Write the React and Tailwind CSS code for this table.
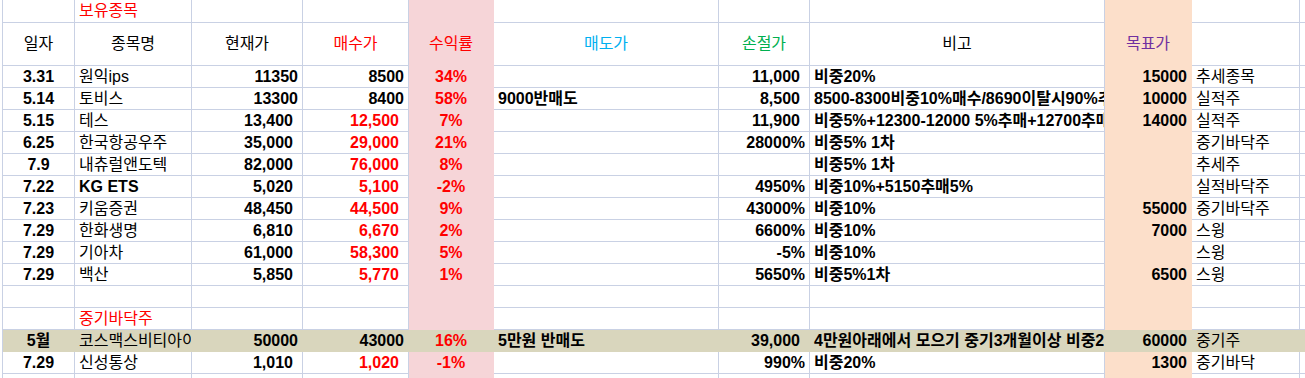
const W = [
  "w-[72px]",
  "w-[117px]",
  "w-[111px]",
  "w-[106px]",
  "w-[85px]",
  "w-[225px]",
  "w-[91px]",
  "w-[295px]",
  "w-[87px]",
  "w-[108px]",
];

const PINK = "bg-[#f6d5d8]";
const PEACH = "bg-[#fcdfca]";
const BEIGE = "bg-[#d9d6bd]";

// align: c = center, l = left, r = plain number, rc = comma number (extra pad)
const AL = {
  c: "justify-center",
  l: "justify-start pl-1",
  r: "justify-end pr-[4px]",
  rc: "justify-end pr-[9px]",
};

// [text, align, className]
const rows = [
  [["3.31", "c", "font-bold"], ["원익ips", "l"], ["11350", "r", "font-bold"], ["8500", "r", "font-bold"], ["34%", "c", "font-bold text-[#ff0000]"], ["", "l"], ["11,000", "rc", "font-bold"], ["비중20%", "l", "font-bold"], ["15000", "r", "font-bold"], ["추세종목", "l"]],
  [["5.14", "c", "font-bold"], ["토비스", "l"], ["13300", "r", "font-bold"], ["8400", "r", "font-bold"], ["58%", "c", "font-bold text-[#ff0000]"], ["9000반매도", "l", "font-bold"], ["8,500", "rc", "font-bold"], ["8500-8300비중10%매수/8690이탈시90%추매", "l", "font-bold"], ["10000", "r", "font-bold"], ["실적주", "l"]],
  [["5.15", "c", "font-bold"], ["테스", "l"], ["13,400", "rc", "font-bold"], ["12,500", "rc", "font-bold text-[#ff0000]"], ["7%", "c", "font-bold text-[#ff0000]"], ["", "l"], ["11,900", "rc", "font-bold"], ["비중5%+12300-12000 5%추매+12700추매", "l", "font-bold"], ["14000", "r", "font-bold"], ["실적주", "l"]],
  [["6.25", "c", "font-bold"], ["한국항공우주", "l"], ["35,000", "rc", "font-bold"], ["29,000", "rc", "font-bold text-[#ff0000]"], ["21%", "c", "font-bold text-[#ff0000]"], ["", "l"], ["28000%", "r", "font-bold"], ["비중5% 1차", "l", "font-bold"], ["", "r"], ["중기바닥주", "l"]],
  [["7.9", "c", "font-bold"], ["내츄럴앤도텍", "l"], ["82,000", "rc", "font-bold"], ["76,000", "rc", "font-bold text-[#ff0000]"], ["8%", "c", "font-bold text-[#ff0000]"], ["", "l"], ["", "r"], ["비중5% 1차", "l", "font-bold"], ["", "r"], ["추세주", "l"]],
  [["7.22", "c", "font-bold"], ["KG ETS", "l", "font-bold"], ["5,020", "rc", "font-bold"], ["5,100", "rc", "font-bold text-[#ff0000]"], ["-2%", "c", "font-bold text-[#ff0000]"], ["", "l"], ["4950%", "r", "font-bold"], ["비중10%+5150추매5%", "l", "font-bold"], ["", "r"], ["실적바닥주", "l"]],
  [["7.23", "c", "font-bold"], ["키움증권", "l"], ["48,450", "rc", "font-bold"], ["44,500", "rc", "font-bold text-[#ff0000]"], ["9%", "c", "font-bold text-[#ff0000]"], ["", "l"], ["43000%", "r", "font-bold"], ["비중10%", "l", "font-bold"], ["55000", "r", "font-bold"], ["중기바닥주", "l"]],
  [["7.29", "c", "font-bold"], ["한화생명", "l"], ["6,810", "rc", "font-bold"], ["6,670", "rc", "font-bold text-[#ff0000]"], ["2%", "c", "font-bold text-[#ff0000]"], ["", "l"], ["6600%", "r", "font-bold"], ["비중10%", "l", "font-bold"], ["7000", "r", "font-bold"], ["스윙", "l"]],
  [["7.29", "c", "font-bold"], ["기아차", "l"], ["61,000", "rc", "font-bold"], ["58,300", "rc", "font-bold text-[#ff0000]"], ["5%", "c", "font-bold text-[#ff0000]"], ["", "l"], ["-5%", "r", "font-bold"], ["비중10%", "l", "font-bold"], ["", "r"], ["스윙", "l"]],
  [["7.29", "c", "font-bold"], ["백산", "l"], ["5,850", "rc", "font-bold"], ["5,770", "rc", "font-bold text-[#ff0000]"], ["1%", "c", "font-bold text-[#ff0000]"], ["", "l"], ["5650%", "r", "font-bold"], ["비중5%1차", "l", "font-bold"], ["6500", "r", "font-bold"], ["스윙", "l"]],
];

const empty = Array.from({ length: 10 }, () => ["", "l"]);

const sectionRow = (title) =>
  empty.map((c, i) => (i === 1 ? [title, "l", "text-[#ff0000]"] : c));

const header = [
  ["일자", "c"],
  ["종목명", "c"],
  ["현재가", "c"],
  ["매수가", "c", "text-[#ff0000]"],
  ["수익률", "c", "text-[#ff0000]"],
  ["매도가", "c", "text-[#00b0f0]"],
  ["손절가", "c", "text-[#00b050]"],
  ["비고", "c"],
  ["목표가", "c", "text-[#7030a0]"],
  ["", "l"],
];

const kosmax = [["5월", "c", "font-bold"], ["코스맥스비티아이", "l"], ["50000", "r", "font-bold"], ["43000", "r", "font-bold"], ["16%", "c", "font-bold text-[#ff0000]"], ["5만원 반매도", "l", "font-bold"], ["39,000", "rc", "font-bold"], ["4만원아래에서 모으기 중기3개월이상 비중20%", "l", "font-bold"], ["60000", "r", "font-bold"], ["중기주", "l"]];

const sinsung = [["7.29", "c", "font-bold"], ["신성통상", "l"], ["1,010", "rc", "font-bold"], ["1,020", "rc", "font-bold text-[#ff0000]"], ["-1%", "c", "font-bold text-[#ff0000]"], ["", "l"], ["990%", "r", "font-bold"], ["비중20%", "l", "font-bold"], ["1300", "r", "font-bold"], ["중기바닥", "l"]];

const colFill = (i) => (i === 4 ? PINK : i === 8 ? PEACH : "");

const Row = ({ cells, h, rowFill, noBottom }) => (
  <div className={"flex " + h}>
    <div className="w-[3px] shrink-0 border-r border-[#c9d1e4]" />
    {cells.map(([text, align, cls], i) => {
      const fill = rowFill || colFill(i);
      return (
        <div
          key={i}
          className={
            "shrink-0 flex items-center overflow-hidden whitespace-nowrap leading-none " +
            W[i] +
            " " +
            AL[align] +
            " " +
            (noBottom ? "border-r " : "border-r border-b ") +
            (fill ? fill + " border-transparent " : "border-[#c9d1e4] ") +
            (cls || "")
          }
        >
          {text}
        </div>
      );
    })}
    <div
      className={
        "flex-1 " +
        (noBottom ? "" : "border-b ") +
        (rowFill ? rowFill + " border-transparent" : "border-[#c9d1e4]")
      }
    />
  </div>
);

export default function App() {
  return (
    <div
      className="w-[1305px] h-[378px] overflow-hidden bg-white text-black text-[16px]"
      style={{ fontFamily: '"Liberation Sans", "Noto Sans CJK KR", sans-serif' }}
    >
      <Row cells={sectionRow("보유종목")} h="h-[23px]" />
      <Row cells={header} h="h-[43px]" />
      {rows.map((r, i) => (
        <Row key={i} cells={r} h="h-[22px]" />
      ))}
      <Row cells={empty} h="h-[22px]" />
      <Row cells={sectionRow("중기바닥주")} h="h-[22px]" />
      <Row cells={kosmax} h="h-[22px]" rowFill={BEIGE} />
      <Row cells={sinsung} h="h-[22px]" />
      <Row cells={empty} h="h-[4px]" noBottom />
    </div>
  );
}
